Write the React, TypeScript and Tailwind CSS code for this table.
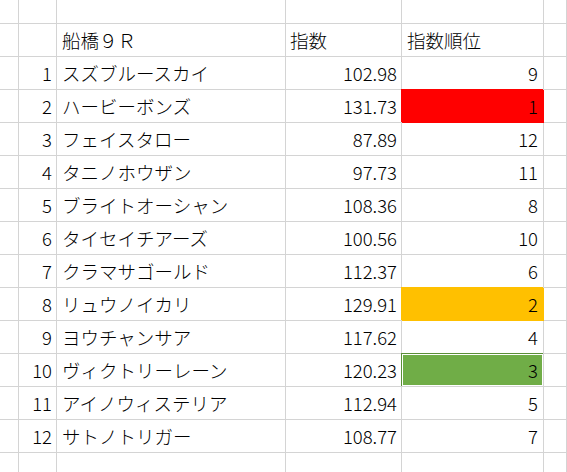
const rows: { name: string; score: string; rank: string; fill?: 'red' | 'orange' | 'green' }[] = [
  { name: 'スズブルースカイ', score: '102.98', rank: '9' },
  { name: 'ハービーボンズ', score: '131.73', rank: '1', fill: 'red' },
  { name: 'フェイスタロー', score: '87.89', rank: '12' },
  { name: 'タニノホウザン', score: '97.73', rank: '11' },
  { name: 'ブライトオーシャン', score: '108.36', rank: '8' },
  { name: 'タイセイチアーズ', score: '100.56', rank: '10' },
  { name: 'クラマサゴールド', score: '112.37', rank: '6' },
  { name: 'リュウノイカリ', score: '129.91', rank: '2', fill: 'orange' },
  { name: 'ヨウチャンサア', score: '117.62', rank: '4' },
  { name: '\u30F4\u30A3\u30AF\u30C8\u30EA\u30FC\u30EC\u30FC\u30F3', score: '120.23', rank: '3', fill: 'green' },
  { name: 'アイノウィステリア', score: '112.94', rank: '5' },
  { name: 'サトノトリガー', score: '108.77', rank: '7' },
];

// fill styles for the rank column (cover the grid lines like a spreadsheet fill)
const FILLS = {
  red: 'bg-[#ff0000] border-[#ff0000] shadow-[-1px_-1px_0_#ff0000]',
  orange: 'bg-[#ffc000] border-[#ffc000] shadow-[-1px_-1px_0_#ffc000]',
  green: 'bg-[#70ad47] border-[#5b8f38] shadow-[-1px_-1px_0_#5b8f38,inset_0_0_0_1px_#ffffff]',
};

const line = 'border-r border-b border-[#d4d4d4] flex items-center overflow-hidden whitespace-nowrap';
const cell = `${line} h-[33px]`;
const topCell = `${line} h-[24px]`;

function Row({ children }: { children: React.ReactNode }) {
  return <div className="grid grid-cols-[19px_38px_229px_116px_142px_1fr]">{children}</div>;
}

export default function App() {
  return (
    <div
      className="w-[567px] h-[472px] overflow-hidden bg-white text-black text-[18.5px] leading-none font-light"
      style={{ fontFamily: '"Noto Sans CJK JP", "Noto Sans", sans-serif' }}
    >
      {/* top partial row */}
      <Row>
        <div className={topCell} />
        <div className={topCell} />
        <div className={topCell} />
        <div className={topCell} />
        <div className={topCell} />
        <div className={topCell} />
      </Row>

      {/* header */}
      <Row>
        <div className={cell} />
        <div className={cell} />
        <div className={`${cell} pl-[5px]`}>船橋９Ｒ</div>
        <div className={`${cell} pl-[4px]`}>指数</div>
        <div className={`${cell} pl-[5px]`}>指数順位</div>
        <div className={cell} />
      </Row>

      {rows.map((r, i) => (
        <Row key={r.name}>
          <div className={cell} />
          <div className={`${cell} justify-end pr-[4px]`}>{i + 1}</div>
          <div className={`${cell} pl-[5px]`}>{r.name}</div>
          <div className={`${cell} justify-end pr-[4px]`}>{r.score}</div>
          <div className={`${cell} justify-end pr-[5px] ${r.fill ? FILLS[r.fill] : ''}`}>{r.rank}</div>
          <div className={cell} />
        </Row>
      ))}

      {/* bottom partial row */}
      <Row>
        <div className={cell} />
        <div className={cell} />
        <div className={cell} />
        <div className={cell} />
        <div className={cell} />
        <div className={cell} />
      </Row>
    </div>
  );
}
